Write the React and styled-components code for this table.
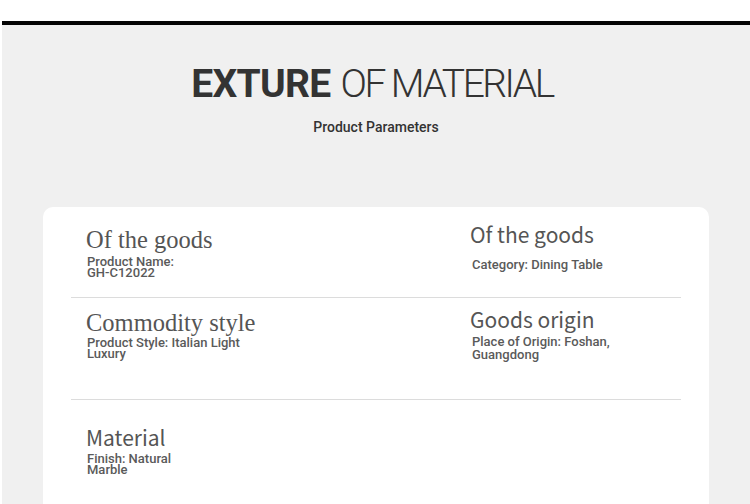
import React from "react";
import styled, { createGlobalStyle } from "styled-components";

const Global = createGlobalStyle`
  html, body { margin: 0; padding: 0; background: #ffffff; }
  body { width: 750px; height: 504px; overflow: hidden; font-family: Roboto, "Liberation Sans", sans-serif; }
`;

const Page = styled.div`
  padding-top: 21px;
  padding-left: 2px;
`;

const TopBar = styled.div`
  height: 4px;
  background: #050505;
`;

const Section = styled.section`
  background: #f0f0f0;
  height: 479px;
  display: flex;
  flex-direction: column;
  align-items: stretch;
  overflow: hidden;
`;

const Header = styled.header`
  display: flex;
  flex-direction: column;
  align-items: center;
  padding-top: 36px;
`;

const Title = styled.h1`
  margin: 0 8px 0 0;
  font-family: Roboto, "Liberation Sans", sans-serif;
  font-size: 39px;
  line-height: 46px;
  color: #333333;
  letter-spacing: -2.5px;
  font-weight: 300;
  white-space: nowrap;
`;

const Strong = styled.span`
  font-weight: 700;
  letter-spacing: -0.7px;
  margin-right: 10px;
`;

const Subtitle = styled.div`
  margin-top: 11px;
  font-size: 14px;
  font-weight: 500;
  color: #333333;
  line-height: 18px;
`;

const Card = styled.div`
  margin: 71px 41px 0 41px;
  background: #ffffff;
  border-radius: 10px 10px 0 0;
  padding: 0 28px;
  flex: 1;
`;

const Row = styled.div`
  display: grid;
  grid-template-columns: 384px 1fr;
  height: ${(p) => p.$h}px;
  border-bottom: ${(p) => (p.$last ? "none" : "1px solid #dcdcdc")};
  box-sizing: border-box;
  padding-left: 15px;
`;

const Cell = styled.div`
  padding-top: ${(p) => p.$top}px;
`;

const SerifHead = styled.div`
  font-family: "Liberation Serif", "DejaVu Serif", serif;
  font-size: 24.5px;
  line-height: 26px;
  color: #555555;
`;

const SansHead = styled.div`
  font-family: "Noto Sans CJK SC", "Noto Sans", sans-serif;
  font-size: 21px;
  line-height: 26px;
  color: #555555;
`;

const Detail = styled.div`
  margin-top: ${(p) => p.$gap}px;
  margin-left: ${(p) => p.$indent || 1}px;
  font-family: Roboto, "Liberation Sans", sans-serif;
  font-size: 13px;
  font-weight: 500;
  line-height: ${(p) => p.$lh}px;
  color: #5a5a5a;
`;

export default function App() {
  return (
    <>
      <Global />
      <Page>
        <TopBar />
        <Section>
          <Header>
            <Title>
              <Strong>EXTURE</Strong>OF MATERIAL
            </Title>
            <Subtitle>Product Parameters</Subtitle>
          </Header>
          <Card>
            <Row $h={91}>
              <Cell $top={20}>
                <SerifHead>Of the goods</SerifHead>
                <Detail $gap={3} $lh={11}>
                  Product Name:
                  <br />
                  GH-C12022
                </Detail>
              </Cell>
              <Cell $top={14}>
                <SansHead>Of the goods</SansHead>
                <Detail $gap={11} $lh={13} $indent={2}>
                  Category: Dining Table
                </Detail>
              </Cell>
            </Row>
            <Row $h={102}>
              <Cell $top={12}>
                <SerifHead>Commodity style</SerifHead>
                <Detail $gap={1} $lh={11}>
                  Product Style: Italian Light
                  <br />
                  Luxury
                </Detail>
              </Cell>
              <Cell $top={8}>
                <SansHead>Goods origin</SansHead>
                <Detail $gap={3} $lh={13} $indent={2}>
                  Place of Origin: Foshan,
                  <br />
                  Guangdong
                </Detail>
              </Cell>
            </Row>
            <Row $h={110} $last>
              <Cell $top={24}>
                <SansHead>Material</SansHead>
                <Detail $gap={3} $lh={11}>
                  Finish: Natural
                  <br />
                  Marble
                </Detail>
              </Cell>
              <Cell $top={0} />
            </Row>
          </Card>
        </Section>
      </Page>
    </>
  );
}
